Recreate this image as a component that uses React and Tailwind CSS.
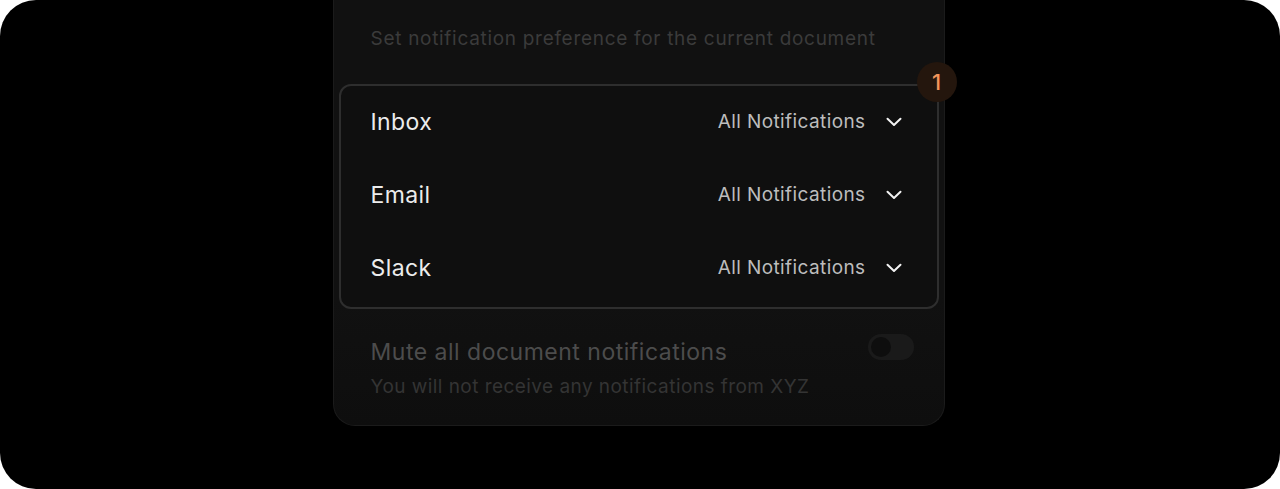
import React from "react";

function Chevron() {
  return (
    <svg width="16" height="10" viewBox="0 0 16 10" fill="none" className="shrink-0">
      <polyline points="1.5,1.8 8,8 14.5,1.8" stroke="#f2f2f2" strokeWidth="2" strokeLinecap="round" strokeLinejoin="round" />
    </svg>
  );
}

function Row({ label }) {
  return (
    <div className="flex h-[73px] items-center justify-between pb-[1px] pl-[30px] pr-[35px]">
      <span className="text-[23px] tracking-[0.4px] text-[#ececec]">{label}</span>
      <div className="flex items-center gap-[20px]">
        <span className="text-[19px] tracking-[0.4px] text-[#bdbdbd]">All Notifications</span>
        <Chevron />
      </div>
    </div>
  );
}

export default function App() {
  return (
    <div className="min-h-screen w-full bg-white" style={{ fontFamily: "Inter, 'Open Sans', sans-serif" }}>
      <div className="flex h-[489px] w-[1280px] justify-center overflow-hidden rounded-[36px] bg-black">
        <div className="mr-[3px] flex h-[426px] w-[612px] flex-col rounded-b-[22px] border-x border-b border-[#1b1b1b] bg-[linear-gradient(to_bottom,#111111_70%,#0e0e0e)] px-[5px]">
          <p className="mt-[27px] pl-[32px] text-[19px] leading-[24px] tracking-[0.7px] text-[#3b3b3b]">
            Set notification preference for the current document
          </p>
          <div className="relative mt-[33px] rounded-[12px] border-2 border-[#2e2e2e] bg-[#0f0f0f] pb-[2px]">
            <Row label="Inbox" />
            <Row label="Email" />
            <Row label="Slack" />
            <div className="absolute right-[-20px] top-[-24px] flex h-[40px] w-[40px] items-center justify-center rounded-full bg-[#24160d] text-[22px] font-medium text-[#f3955a]">
              1
            </div>
          </div>
          <div className="mt-[28px] flex items-start justify-between pl-[32px] pr-[25px]">
            <div className="flex flex-col">
              <span className="text-[23px] leading-[30px] tracking-[0.5px] text-[#4c4c4c]">Mute all document notifications</span>
              <span className="mt-[8px] text-[19px] leading-[24px] tracking-[0.45px] text-[#343434]">
                You will not receive any notifications from XYZ
              </span>
            </div>
            <div className="mt-[-3px] flex h-[26px] w-[46px] items-center rounded-full bg-[#1a1a1a] px-[3px]">
              <div className="h-[20px] w-[20px] rounded-full bg-[#0e0e0e]" />
            </div>
          </div>
        </div>
      </div>
    </div>
  );
}
